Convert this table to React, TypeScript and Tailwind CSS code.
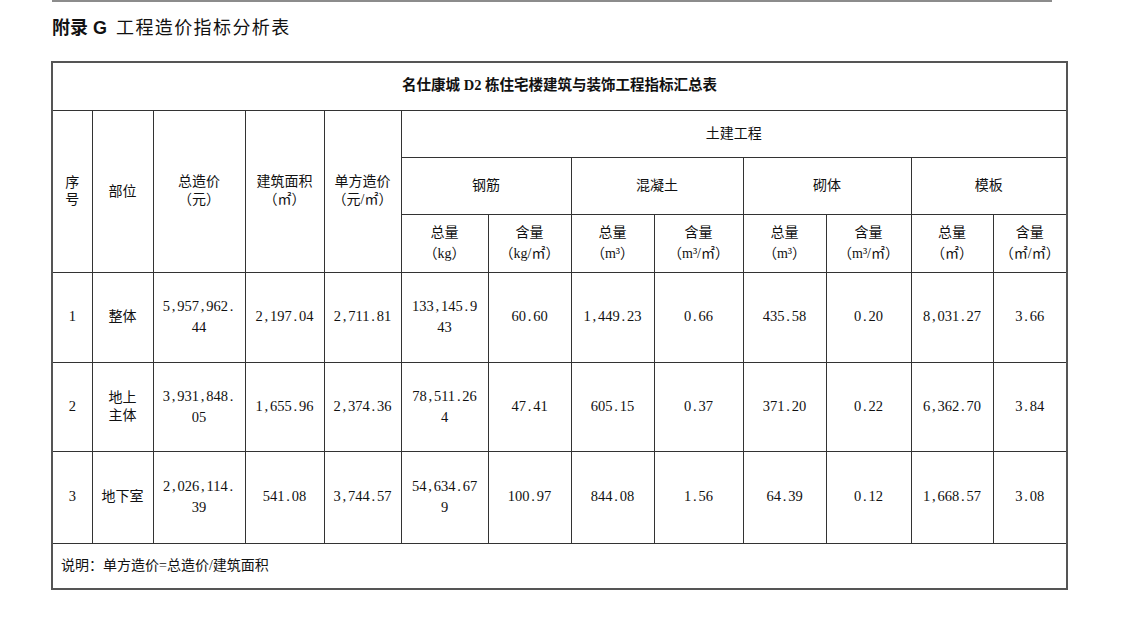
import React from "react";

const N = ({ s }: { s: string }) => (
  <>
    {s.split("").map((c, i) =>
      c === "," || c === "." ? (
        <span key={i} className="inline-block w-[0.5em]">
          {c}
        </span>
      ) : (
        <React.Fragment key={i}>{c}</React.Fragment>
      )
    )}
  </>
);

const L = () => <span className="inline-block w-[1em] text-right">（</span>;
const R = () => <span className="inline-block w-[1em] text-left">）</span>;

const U = ({ children }: { children: React.ReactNode }) => (
  <div>
    <L />
    {children}
    <R />
  </div>
);

const Lines = ({ lines, lh }: { lines: string[]; lh: string }) => (
  <div className={lh}>
    {lines.map((l, i) => (
      <div key={i}>
        <N s={l} />
      </div>
    ))}
  </div>
);

type Row = {
  n: string;
  part: string[];
  total: string[];
  area: string;
  unit: string;
  rt: string[];
  rc: string;
  ct: string;
  cc: string;
  mt: string;
  mc: string;
  ft: string;
  fc: string;
  h: string;
};

const rows: Row[] = [
  {
    n: "1",
    part: ["整体"],
    total: ["5,957,962.", "44"],
    area: "2,197.04",
    unit: "2,711.81",
    rt: ["133,145.9", "43"],
    rc: "60.60",
    ct: "1,449.23",
    cc: "0.66",
    mt: "435.58",
    mc: "0.20",
    ft: "8,031.27",
    fc: "3.66",
    h: "h-[90px]",
  },
  {
    n: "2",
    part: ["地上", "主体"],
    total: ["3,931,848.", "05"],
    area: "1,655.96",
    unit: "2,374.36",
    rt: ["78,511.26", "4"],
    rc: "47.41",
    ct: "605.15",
    cc: "0.37",
    mt: "371.20",
    mc: "0.22",
    ft: "6,362.70",
    fc: "3.84",
    h: "h-[89px]",
  },
  {
    n: "3",
    part: ["地下室"],
    total: ["2,026,114.", "39"],
    area: "541.08",
    unit: "3,744.57",
    rt: ["54,634.67", "9"],
    rc: "100.97",
    ct: "844.08",
    cc: "1.56",
    mt: "64.39",
    mc: "0.12",
    ft: "1,668.57",
    fc: "3.08",
    h: "h-[92px]",
  },
];

const td = "border border-[#333] text-center align-middle px-[2px] whitespace-nowrap";

export default function App() {
  return (
    <div className="w-[1133px] h-[625px] bg-white text-[#111] overflow-hidden">
      <div className="ml-[52px] w-[1000px] h-[2px] bg-[#8c8c8c]" />
      <div className="ml-[52px] mt-[14px] h-[24px] flex items-center font-['Liberation_Sans','Noto_Sans_CJK_SC',sans-serif] text-[18px] leading-[24px]">
        <span className="font-bold">附录 G</span>
        <span className="ml-[9px] tracking-[1.4px]">工程造价指标分析表</span>
      </div>
      <div className="ml-[51px] mt-[21px]">
        <table className="table-fixed w-[1015px] border-collapse border-2 border-[#555] font-['Liberation_Serif','Noto_Sans_CJK_SC',serif] text-[14px]">
          <colgroup>
            <col className="w-[40px]" />
            <col className="w-[61px]" />
            <col className="w-[92px]" />
            <col className="w-[79px]" />
            <col className="w-[77px]" />
            <col className="w-[87px]" />
            <col className="w-[83px]" />
            <col className="w-[83px]" />
            <col className="w-[89px]" />
            <col className="w-[83px]" />
            <col className="w-[85px]" />
            <col className="w-[82px]" />
            <col className="w-[74px]" />
          </colgroup>
          <tbody>
            <tr className="h-[48px]">
              <td colSpan={13} className={`${td} font-bold text-[14.5px]`}>
                名仕康城 D2 栋住宅楼建筑与装饰工程指标汇总表
              </td>
            </tr>
            <tr className="h-[47px]">
              <td rowSpan={3} className={`${td} leading-[17px]`}>
                <div>序</div>
                <div>号</div>
              </td>
              <td rowSpan={3} className={td}>
                部位
              </td>
              <td rowSpan={3} className={`${td} leading-[18px]`}>
                <div>总造价</div>
                <U>元</U>
              </td>
              <td rowSpan={3} className={`${td} leading-[18px]`}>
                <div>建筑面积</div>
                <U>㎡</U>
              </td>
              <td rowSpan={3} className={`${td} leading-[18px]`}>
                <div>单方造价</div>
                <U>元/㎡</U>
              </td>
              <td colSpan={8} className={td}>
                土建工程
              </td>
            </tr>
            <tr className="h-[57px]">
              <td colSpan={2} className={td}>钢筋</td>
              <td colSpan={2} className={td}>混凝土</td>
              <td colSpan={2} className={td}>砌体</td>
              <td colSpan={2} className={td}>模板</td>
            </tr>
            <tr className="h-[58px] leading-[21px]">
              <td className={td}>
                <div>总量</div>
                <U>kg</U>
              </td>
              <td className={td}>
                <div>含量</div>
                <U>kg/㎡</U>
              </td>
              <td className={td}>
                <div>总量</div>
                <U>m³</U>
              </td>
              <td className={td}>
                <div>含量</div>
                <U>m³/㎡</U>
              </td>
              <td className={td}>
                <div>总量</div>
                <U>m³</U>
              </td>
              <td className={td}>
                <div>含量</div>
                <U>m³/㎡</U>
              </td>
              <td className={td}>
                <div>总量</div>
                <U>㎡</U>
              </td>
              <td className={td}>
                <div>含量</div>
                <U>㎡/㎡</U>
              </td>
            </tr>
            {rows.map((r) => (
              <tr key={r.n} className={`${r.h} text-[14.5px]`}>
                <td className={td}>{r.n}</td>
                <td className={`${td} text-[14px]`}>
                  <Lines lines={r.part} lh="leading-[18px]" />
                </td>
                <td className={td}>
                  <Lines lines={r.total} lh="leading-[21px]" />
                </td>
                <td className={td}>
                  <N s={r.area} />
                </td>
                <td className={td}>
                  <N s={r.unit} />
                </td>
                <td className={td}>
                  <Lines lines={r.rt} lh="leading-[21px]" />
                </td>
                <td className={td}>
                  <N s={r.rc} />
                </td>
                <td className={td}>
                  <N s={r.ct} />
                </td>
                <td className={td}>
                  <N s={r.cc} />
                </td>
                <td className={td}>
                  <N s={r.mt} />
                </td>
                <td className={td}>
                  <N s={r.mc} />
                </td>
                <td className={td}>
                  <N s={r.ft} />
                </td>
                <td className={td}>
                  <N s={r.fc} />
                </td>
              </tr>
            ))}
            <tr className="h-[46px]">
              <td colSpan={13} className="border border-[#333] text-left align-middle pl-[8px]">
                说明<span className="inline-block w-[1em] text-left">：</span>单方造价=总造价/建筑面积
              </td>
            </tr>
          </tbody>
        </table>
      </div>
    </div>
  );
}
